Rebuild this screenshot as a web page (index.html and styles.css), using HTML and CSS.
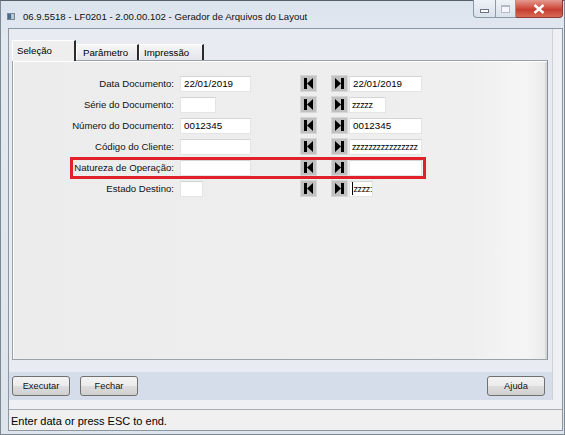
FILE: index.html
```html
<!DOCTYPE html>
<html lang="pt">
<head>
  <meta charset="UTF-8" />
  <title>Gerador de Arquivos do Layout</title>
  <link rel="stylesheet" href="styles.css">
</head>
<body>
  <div class="window">
    <div class="titlebar">
      <span class="app-icon"></span>
      <span class="title">06.9.5518 - LF0201 - 2.00.00.102 - Gerador de Arquivos do Layout</span>
      <div class="caption">
        <span class="cap-btn cap-min"><i></i></span>
        <span class="cap-btn cap-max"><i></i></span>
        <span class="cap-btn cap-close">
          <svg viewBox="0 0 12 10" width="12" height="10"><path d="M1.5 1l9 8M10.5 1l-9 8" stroke="#fff" stroke-width="2.4" fill="none"/></svg>
        </span>
      </div>
    </div>

    <div class="client">
      <div class="main">
        <div class="tabs">
          <div class="tab active t1">Seleção</div>
          <div class="tab t2">Parâmetro</div>
          <div class="tab t3">Impressão</div>
        </div>

        <!-- Seleção -->
        <div class="panel">
          <div class="row">
            <span class="lbl">Data Documento:</span>
            <span class="from"><span class="field w70">22/01/2019</span></span>
            <span class="nav"><svg viewBox="0 0 15 15"><path d="M3 2h3v11H3zM6 7.5L12 2v11z"/></svg></span>
            <span class="nav nav2"><svg viewBox="0 0 15 15"><path d="M3 2l6 5.5L3 13zM9 2h3v11H9z"/></svg></span>
            <span class="field to w73">22/01/2019</span>
          </div>
          <div class="row">
            <span class="lbl">Série do Documento:</span>
            <span class="from"><span class="field w35"></span></span>
            <span class="nav"><svg viewBox="0 0 15 15"><path d="M3 2h3v11H3zM6 7.5L12 2v11z"/></svg></span>
            <span class="nav nav2"><svg viewBox="0 0 15 15"><path d="M3 2l6 5.5L3 13zM9 2h3v11H9z"/></svg></span>
            <span class="field to w36 zz">zzzzz</span>
          </div>
          <div class="row">
            <span class="lbl">Número do Documento:</span>
            <span class="from"><span class="field w70">0012345</span></span>
            <span class="nav"><svg viewBox="0 0 15 15"><path d="M3 2h3v11H3zM6 7.5L12 2v11z"/></svg></span>
            <span class="nav nav2"><svg viewBox="0 0 15 15"><path d="M3 2l6 5.5L3 13zM9 2h3v11H9z"/></svg></span>
            <span class="field to w73">0012345</span>
          </div>
          <div class="row">
            <span class="lbl">Código do Cliente:</span>
            <span class="from"><span class="field w70"></span></span>
            <span class="nav"><svg viewBox="0 0 15 15"><path d="M3 2h3v11H3zM6 7.5L12 2v11z"/></svg></span>
            <span class="nav nav2"><svg viewBox="0 0 15 15"><path d="M3 2l6 5.5L3 13zM9 2h3v11H9z"/></svg></span>
            <span class="field to w73 zz">zzzzzzzzzzzzzzzz</span>
          </div>
          <div class="row">
            <span class="lbl">Natureza de Operação:</span>
            <span class="from"><span class="field w70"></span></span>
            <span class="nav"><svg viewBox="0 0 15 15"><path d="M3 2h3v11H3zM6 7.5L12 2v11z"/></svg></span>
            <span class="nav nav2"><svg viewBox="0 0 15 15"><path d="M3 2l6 5.5L3 13zM9 2h3v11H9z"/></svg></span>
            <span class="field to w73"></span>
            <span class="mark"></span>
          </div>
          <div class="row">
            <span class="lbl">Estado Destino:</span>
            <span class="from"><span class="field w22"></span></span>
            <span class="nav"><svg viewBox="0 0 15 15"><path d="M3 2h3v11H3zM6 7.5L12 2v11z"/></svg></span>
            <span class="nav nav2"><svg viewBox="0 0 15 15"><path d="M3 2l6 5.5L3 13zM9 2h3v11H9z"/></svg></span>
            <span class="field to w24 zz"><span class="caret"></span>zzzz:</span>
          </div>
        </div>

        <div class="buttonbar">
          <button class="btn">Executar</button>
          <button class="btn">Fechar</button>
          <button class="btn right">Ajuda</button>
        </div>
      </div>
      <div class="status">Enter data or press ESC to end.</div>
    </div>
  </div>
</body>
</html>
```

FILE: styles.css
```css
* {
  box-sizing: border-box;
}
body {
  margin: 0;
  background: #5f6b78;
  font-family: "Liberation Sans", Arial, sans-serif;
  color: #000;
}
.window {
  width: 565px;
  height: 435px;
  border: 1px solid #7d8895;
  border-top-color: #55606c;
  background: linear-gradient(to bottom, #dbe3ed, #e3e9f1 40px, #dde4ec);
  padding: 0 1px 3px 7px;
  display: flex;
  flex-direction: column;
}
.titlebar {
  height: 27px;
  display: flex;
  align-items: center;
}
.app-icon {
  width: 8px;
  height: 7px;
  margin: 3px 8px 0 -1px;
  background: linear-gradient(to right, #4a6a88 0, #4a6a88 3px, #b9c6d3 3px);
  border: 1px solid #7a8896;
}
.title {
  font-size: 9.6px;
  margin-top: 3px;
  color: #111;
}
.caption {
  margin-left: auto;
  align-self: flex-start;
  display: flex;
  margin-top: -1px;
}
.cap-btn {
  height: 18px;
  display: flex;
  align-items: center;
  justify-content: center;
  border: 1px solid #8d99a6;
  border-top: none;
}
.cap-min {
  width: 23px;
  border-radius: 0 0 0 4px;
  background: linear-gradient(#eef2f7, #d9e1ea);
}
.cap-min i {
  width: 9px;
  height: 4px;
  margin-top: 4px;
  border: 1px solid #6b7480;
  background: #fff;
}
.cap-max {
  width: 20px;
  border-left: none;
  background: linear-gradient(#eef2f7, #d9e1ea);
}
.cap-max i {
  width: 9px;
  height: 8px;
  border: 1px solid #b3bac3;
  border-top-width: 2px;
  background: #f4f6f9;
}
.cap-close {
  width: 47px;
  border-left: none;
  border-color: #8d3a34;
  border-radius: 0 0 4px 0;
  background: linear-gradient(#e39a8f, #cf4a3c 50%, #c2392b 51%, #d86a55);
}
.client {
  flex: 1;
  border: 1px solid #8c97a3;
  background: #eef0f3;
  display: flex;
  flex-direction: column;
}
.main {
  width: 544px;
  background: #e8ebf2;
  border-right: 1px solid #cdd2d9;
}
.tabs {
  height: 31px;
  padding: 11px 0 0 3px;
  display: flex;
  align-items: flex-end;
}
.tab {
  height: 16px;
  font-size: 9.7px;
  padding: 2px 0 0 5px;
  background: linear-gradient(#f6f6f8, #e4e5ea);
  border-top: 1px solid #fff;
  border-left: 1px solid #fff;
  border-right: 2px solid #2b2b2b;
  white-space: nowrap;
}
.tab.active {
  height: 21px;
  margin-bottom: -1px;
  padding: 4px 0 0 4px;
  background: #eeeeee;
  position: relative;
  z-index: 1;
}
.t1 { width: 64px; }
.t2 { width: 63px; padding-left: 6px; }
.t3 { width: 65px; padding-left: 4px; }
.panel {
  margin-left: 3px;
  width: 536px;
  height: 300px;
  border: 1px solid #9aa1aa;
  border-right-color: #8a9098;
  box-shadow: inset 1px 1px 0 #fff, inset -2px 0 0 #d6d8dc;
  background: linear-gradient(to right, #ececec 0, #efefef 85%, #f5f5f5 96%, #eaeaea 100%);
  padding-top: 14px;
  display: flex;
  flex-direction: column;
  gap: 4px;
}
.row {
  height: 17px;
  display: flex;
  align-items: center;
  position: relative;
}
.lbl {
  width: 161px;
  text-align: right;
  font-size: 9.6px;
  color: #111;
}
.from {
  width: 126px;
  padding-left: 6px;
  display: flex;
}
.field {
  height: 16px;
  background: #fff;
  border: 1px solid #e4e4e4;
  border-top-color: #d4d4d4;
  font-size: 9.8px;
  padding-left: 3px;
  white-space: nowrap;
  overflow: hidden;
  display: flex;
  align-items: center;
}
.field.to {
  margin-left: 1px;
}
.field.zz {
  font-size: 9px;
  letter-spacing: -0.4px;
  padding-left: 2px;
}
.w22 { width: 23px; }
.w24 { width: 24px; }
.w35 { width: 36px; }
.w36 { width: 37px; }
.w70 { width: 71px; }
.w73 { width: 73px; }
.caret {
  width: 1px;
  height: 13px;
  background: #000;
  margin-right: 1px;
}
.nav {
  width: 17px;
  height: 17px;
  background: #c0c0c0;
  border: 1px solid #d6d6d6;
  display: flex;
}
.nav svg {
  width: 15px;
  height: 15px;
  fill: #000;
}
.nav2 {
  margin-left: 14px;
}
.mark {
  position: absolute;
  left: 57px;
  top: -2px;
  width: 356px;
  height: 22px;
  border: 3px solid #e0202a;
}
.buttonbar {
  margin-top: 12px;
  height: 28px;
  background: #d6ddea;
  display: flex;
  align-items: center;
  gap: 10px;
  padding: 0 7px 0 3px;
}
.btn {
  width: 58px;
  height: 20px;
  font-family: "Liberation Sans", Arial, sans-serif;
  font-size: 9.3px;
  color: #111;
  border: 1px solid #707070;
  border-radius: 3px;
  background: linear-gradient(#f3f3f3, #ebebeb 50%, #dddddd 51%, #cfcfcf);
  padding: 0;
}
.btn.right {
  margin-left: auto;
}
.status {
  margin-top: 9px;
  flex: 1;
  border-top: 1px solid #a7adb5;
  background: #f0f0f0;
  font-size: 11px;
  padding: 5px 0 0 2px;
}
```
